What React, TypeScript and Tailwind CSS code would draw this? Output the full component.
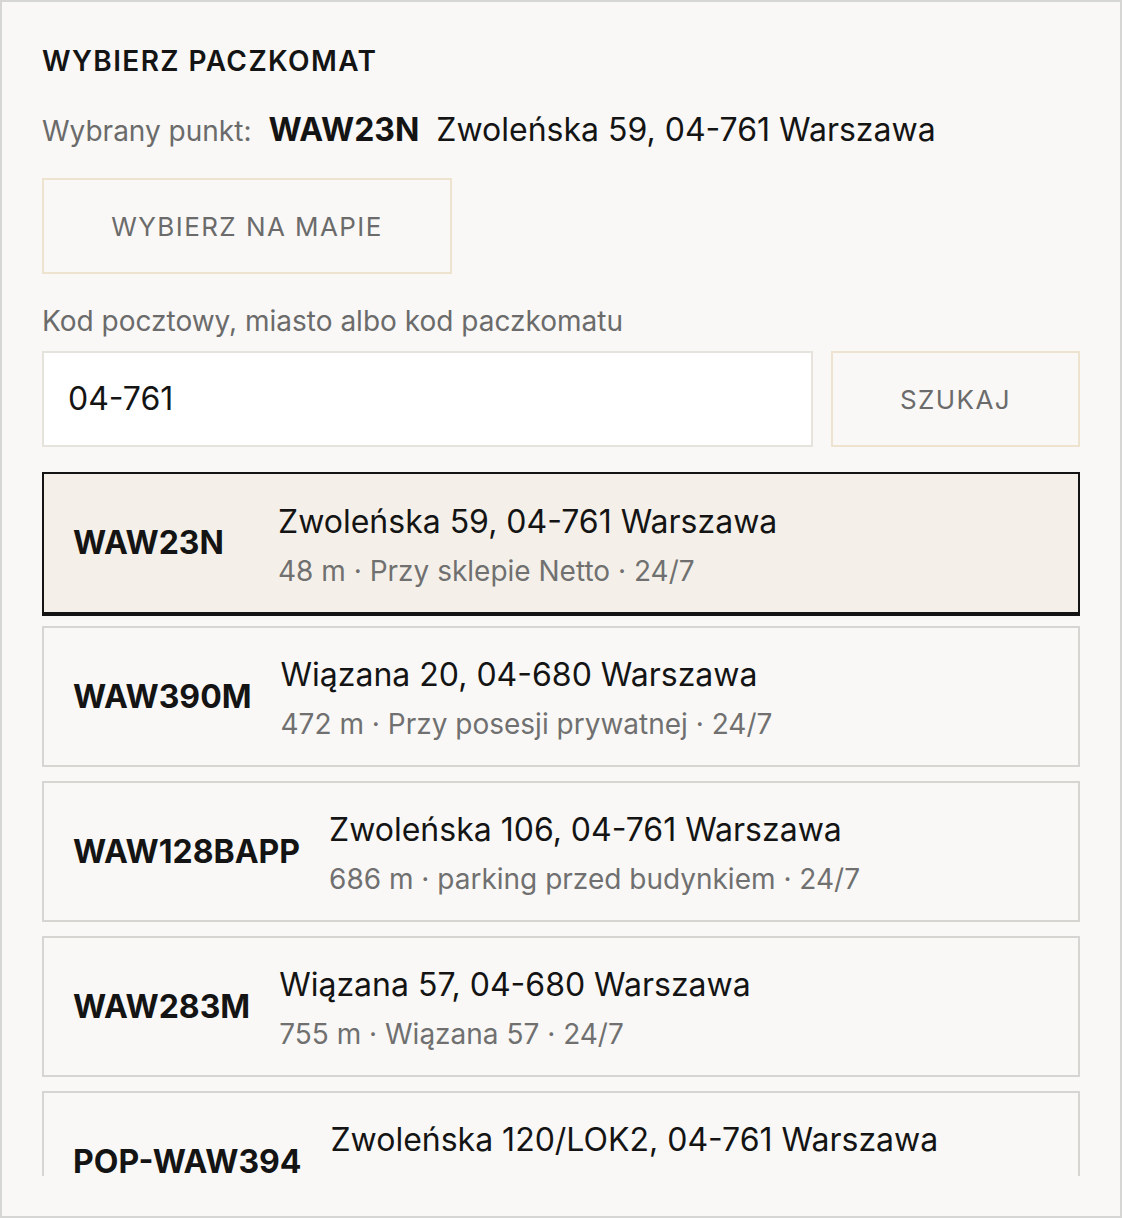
import React from "react";

type Locker = {
  code: string;
  address: string;
  distance: string;
  place: string;
  hours: string;
};

const lockers: Locker[] = [
  { code: "WAW23N", address: "Zwoleńska 59, 04-761 Warszawa", distance: "48 m", place: "Przy sklepie Netto", hours: "24/7" },
  { code: "WAW390M", address: "Wiązana 20, 04-680 Warszawa", distance: "472 m", place: "Przy posesji prywatnej", hours: "24/7" },
  { code: "WAW128BAPP", address: "Zwoleńska 106, 04-761 Warszawa", distance: "686 m", place: "parking przed budynkiem", hours: "24/7" },
  { code: "WAW283M", address: "Wiązana 57, 04-680 Warszawa", distance: "755 m", place: "Wiązana 57", hours: "24/7" },
  { code: "POP-WAW394", address: "Zwoleńska 120/LOK2, 04-761 Warszawa", distance: "812 m", place: "Przy garażu", hours: "24/7" },
];

function LockerRow({ item, selected }: { item: Locker; selected: boolean }) {
  return (
    <div
      className={
        selected
          ? "flex shrink-0 items-center gap-[29px] h-[144px] mb-[10px] pl-[29px] pr-[30px] border-2 border-b-4 border-[#141414] bg-[#f4f0e9]"
          : "flex shrink-0 items-center gap-[29px] h-[141px] mb-[14px] pl-[29px] pr-[30px] border-2 border-[#d6d5d2] bg-[#f9f8f6]"
      }
    >
      <div className="min-w-[176px] text-[32px] font-bold text-[#141414] leading-none">{item.code}</div>
      <div className="flex flex-col pt-[4px]">
        <div className="text-[32px] leading-[40px] text-[#141414]">{item.address}</div>
        <div className="mt-[11px] text-[28px] leading-[36px] text-[#707070]">
          {item.distance} · {item.place} · {item.hours}
        </div>
      </div>
    </div>
  );
}

export default function App() {
  return (
    <div
      className="w-[1122px] h-[1218px] flex flex-col bg-[#f9f8f6] border-2 border-[#d6d6d4] px-[40px] pt-[40px] pb-[40px] overflow-hidden"
      style={{ fontFamily: "Inter, 'Noto Sans', sans-serif" }}
    >
      <h2 className="text-[28px] leading-[39px] font-semibold tracking-[0.05em] text-[#141414]">WYBIERZ PACZKOMAT</h2>

      <div className="mt-[26px] flex items-baseline leading-[45px]">
        <span className="text-[28px] text-[#6b6b6b]">Wybrany punkt:</span>
        <span className="ml-[17px] text-[32px] font-bold text-[#141414]">WAW23N</span>
        <span className="ml-[17px] text-[32px] text-[#141414]">Zwoleńska 59, 04-761 Warszawa</span>
      </div>

      <button className="mt-[24px] w-[410px] h-[96px] border-2 border-[#ede3cf] text-[26px] tracking-[0.055em] text-[#6b6b6b]">
        WYBIERZ NA MAPIE
      </button>

      <label className="mt-[28px] text-[28px] leading-[39px] text-[#6b6b6b]">Kod pocztowy, miasto albo kod paczkomatu</label>

      <div className="mt-[10px] flex gap-[18px]">
        <div className="flex-1 h-[96px] flex items-center px-[24px] bg-white border-2 border-[#e6e3dd] text-[32px] text-[#141414]">
          04-761
        </div>
        <button className="w-[249px] h-[96px] border-2 border-[#ede3cf] text-[26px] tracking-[0.055em] text-[#6b6b6b]">
          SZUKAJ
        </button>
      </div>

      <div className="mt-[25px] flex-1 min-h-0 overflow-hidden flex flex-col">
        {lockers.map((l, i) => (
          <LockerRow key={l.code} item={l} selected={i === 0} />
        ))}
      </div>
    </div>
  );
}
